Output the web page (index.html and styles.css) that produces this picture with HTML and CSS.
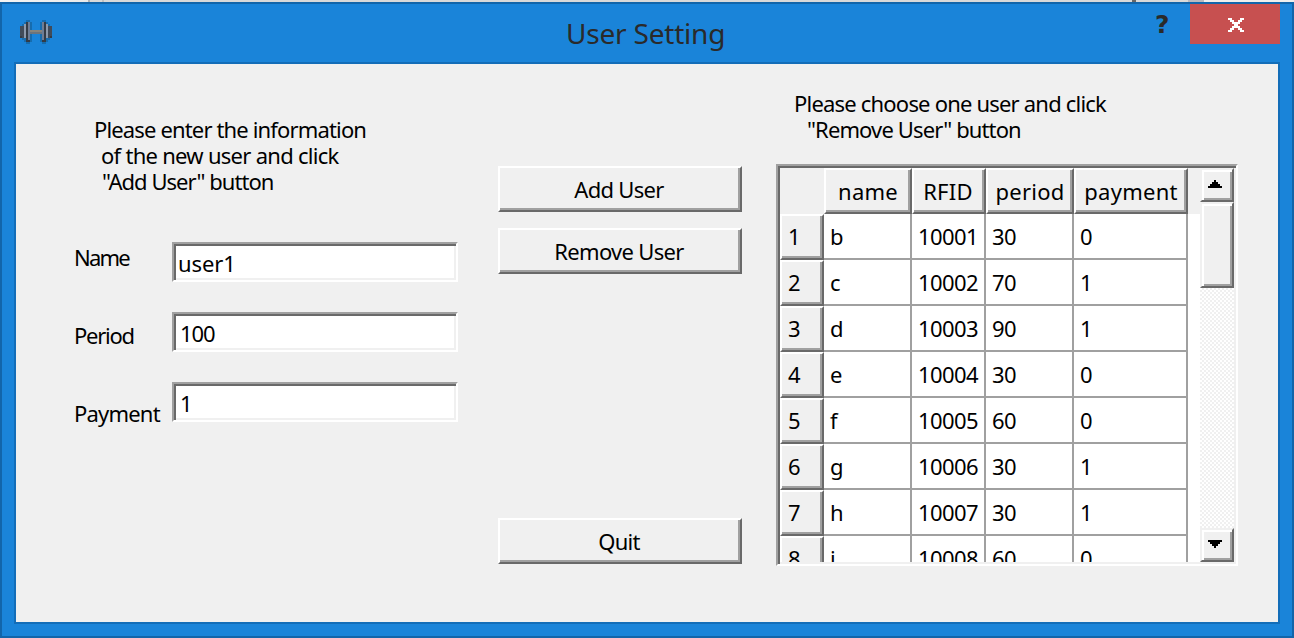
FILE: index.html
```html
<!DOCTYPE html>
<html lang="en">
<head>
<meta charset="utf-8">
<title>User Setting</title>
<link rel="stylesheet" href="styles.css">
</head>
<body>
<div class="backdrop"></div>
<div class="window">
  <header class="titlebar">
    <svg class="app-icon" width="32" height="24" viewBox="0 0 32 24" shape-rendering="crispEdges">
      <path fill="#166cae" d="M6 0h4v2h2v20h-2v2H6v-2H4v-2H2V4h2V2h2zM22 0h4v2h2v2h2v16h-2v2h-2v2h-4v-2h-2V2h2z"/>
      <path fill="#414b59" d="M0 6h4v12H0zM28 6h4v12h-4z"/>
      <path fill="#333b46" d="M6 2h4v20H6zM22 2h4v20h-4zM0 16h2v2H0zM30 16h2v2h-2z"/>
      <path fill="#8d9aac" d="M4 4h2v14H4zM26 4h2v14h-2z"/>
      <path fill="#6e7d95" d="M8 2h2v18H8zM22 2h2v18h-2z"/>
      <path fill="#333b46" d="M6 4h2v16H6zM24 4h2v16h-2z"/>
      <path fill="#6b747d" d="M10 10h12v4H10z"/>
      <path fill="#87847b" d="M10 10h12v2H10z"/>
    </svg>
    <h1 class="title">User Setting</h1>
    <span class="help">?</span>
    <button class="close" aria-label="Close">
      <svg width="16" height="14" viewBox="0 0 8 7" shape-rendering="crispEdges" fill="#fff"><path d="M0 0h2v1h1v1h2V1h1V0h2v1H7v1H6v1H5v1h1v1h1v1h1v1H6V6H5V5H3v1H2v1H0V6h1V5h1V4h1V3H2V2H1V1H0z"/></svg>
    </button>
  </header>
  <main class="client">
    <section class="form">
      <p class="hint add-hint"><span class="h1">Please enter the information</span><span class="h2">of the new user and click</span><span class="h3">"Add User" button</span></p>
      <div class="fields">
        <div class="labels"><span class="l-name">Name</span><span class="l-period">Period</span><span class="l-pay">Payment</span></div>
        <div class="inputs">
          <div class="input first">user1</div>
          <div class="input">100</div>
          <div class="input">1</div>
        </div>
      </div>
    </section>
    <section class="actions">
      <button class="btn b-add">Add User</button>
      <button class="btn b-remove">Remove User</button>
      <button class="btn quit">Quit</button>
    </section>
    <section class="users">
      <p class="hint remove-hint"><span class="r1">Please choose one user and click</span><span class="r2">"Remove User" button</span></p>
      <div class="frame">
        <div class="view">
          <div class="row head"><span class="corner"></span><span class="hc">name</span><span class="hc rfid">RFID</span><span class="hc">period</span><span class="hc">payment</span></div>
          <div class="row"><span class="rh">1</span><span>b</span><span>10001</span><span>30</span><span>0</span></div>
          <div class="row"><span class="rh">2</span><span>c</span><span>10002</span><span>70</span><span>1</span></div>
          <div class="row"><span class="rh">3</span><span>d</span><span>10003</span><span>90</span><span>1</span></div>
          <div class="row"><span class="rh">4</span><span>e</span><span>10004</span><span>30</span><span>0</span></div>
          <div class="row"><span class="rh">5</span><span>f</span><span>10005</span><span>60</span><span>0</span></div>
          <div class="row"><span class="rh">6</span><span>g</span><span>10006</span><span>30</span><span>1</span></div>
          <div class="row"><span class="rh">7</span><span>h</span><span>10007</span><span>30</span><span>1</span></div>
          <div class="row"><span class="rh">8</span><span>i</span><span>10008</span><span>60</span><span>0</span></div>
        </div>
        <div class="scrollbar">
          <div class="sb arrow"><svg width="14" height="8" viewBox="0 0 7 4" shape-rendering="crispEdges"><path d="M3 0h1v1h1v1h1v1h1v1H0V3h1V2h1V1h1z"/></svg></div>
          <div class="sb thumb"></div>
          <div class="track"></div>
          <div class="sb arrow"><svg width="14" height="8" viewBox="0 0 7 4" shape-rendering="crispEdges"><path d="M0 0h7v1H6v1H5v1H4v1H3V3H2V2H1V1H0z"/></svg></div>
        </div>
      </div>
    </section>
  </main>
</div>
</body>
</html>
```
FILE: styles.css
```css
* { box-sizing: border-box; }
body { margin: 0; width: 1294px; height: 638px; overflow: hidden; color: #000; font: 22px/26px "Noto Sans", sans-serif; }
p, h1 { margin: 0; font-weight: 400; }
button { padding: 0; border: 0; font: inherit; color: inherit; }
svg { display: block; }

.backdrop { height: 2px; background: linear-gradient(90deg, #f3f3f3 0, #e9e9e9 88px, #b4b4b4 88px 90px, #d9d9d9 90px 102px, #c0c0c0 102px 104px, #d9d9d9 104px 1132px, #666 1132px 1136px, #d9d9d9 1136px 1188px, #b9b9c0 1188px 1204px, #eee 1204px); }
.window { height: 636px; border: 2px solid #1265aa; background: #1a84d9; padding: 0 12px 12px; }
.titlebar { height: 58px; display: flex; align-items: flex-start; }
.app-icon { margin: 16px 0 0 6px; }
.title { margin: 11px 0 0 514px; width: 589px; font-size: 28px; line-height: 36px; letter-spacing: -.2px; color: #2a2a2a; white-space: nowrap; }
.help { width: 35px; margin-top: 7px; font: bold 25px/28px "DejaVu Sans", sans-serif; color: #2a2a2a; }
.close { width: 90px; height: 40px; background: #c75050; display: flex; justify-content: center; padding: 14px 0 0 2px; }
.client { height: 562px; border: 2px solid #136db8; background: #f0f0f0; display: flex; }

.form { width: 482px; padding: 52px 0 0 58px; }
.hint { display: flex; flex-direction: column; white-space: nowrap; }
.add-hint { padding-left: 20px; }
.h1 { letter-spacing: -.85px; }
.h2 { margin-left: 7px; letter-spacing: -.72px; }
.h3 { margin-left: 8px; letter-spacing: -.97px; }
.fields { display: flex; margin-top: 48px; }
.labels { width: 98px; padding-top: 2px; display: flex; flex-direction: column; gap: 52px; }
.l-name { letter-spacing: -1.8px; }
.l-period { letter-spacing: -1.25px; }
.l-pay { letter-spacing: -.8px; }
.inputs { display: flex; flex-direction: column; gap: 30px; }
.input { width: 286px; height: 40px; background: #fff; border: 2px solid; border-color: #a0a0a0 #fff #fff #a0a0a0; box-shadow: inset 2px 2px #696969, inset -2px -2px #f0f0f0; padding: 6px 0 0 6px; letter-spacing: -1.1px; }
.first { padding-left: 4px; letter-spacing: -.1px; }

.actions { width: 278px; padding-top: 102px; display: flex; flex-direction: column; gap: 16px; }
.btn { width: 244px; height: 46px; padding-right: 2px; background: #f0f0f0; border: 2px solid; border-color: #fff #696969 #696969 #fff; box-shadow: inset -2px -2px #a0a0a0; letter-spacing: -.7px; }
.quit { margin-top: 228px; }

.users { padding-top: 26px; }
.remove-hint { padding-left: 18px; }
.r1 { letter-spacing: -.8px; }
.r2 { margin-left: 13px; letter-spacing: -.88px; }
.frame { margin-top: 22px; width: 462px; height: 402px; display: flex; background: #fff; border: 2px solid; border-color: #a0a0a0 #fff #fff #a0a0a0; padding: 2px; box-shadow: inset 2px 2px #696969, inset -2px -2px #f0f0f0; }
.view { width: 420px; height: 394px; overflow: hidden; }
.row { display: grid; grid-template-columns: 44px 88px 74px 88px 114px; grid-template-rows: 46px; height: 46px; }
.row span { border-right: 2px solid #a0a0a0; border-bottom: 2px solid #a0a0a0; padding-left: 6px; line-height: 44px; letter-spacing: -.6px; }
.row.head { background: #f0f0f0; }
.row .corner { border: 0; }
.row .hc, .row .rh { background: #f0f0f0; border: 2px solid; border-color: #fff #696969 #696969 #fff; box-shadow: inset -2px -2px #a0a0a0; line-height: 42px; }
.row .hc { padding: 0; text-align: center; letter-spacing: .25px; }
.row .rfid { padding-right: 2px; }
.row .rh { padding-left: 6px; line-height: 40px; }
.scrollbar { width: 34px; height: 394px; display: flex; flex-direction: column; }
.sb { border: 2px solid; border-color: #f0f0f0 #696969 #696969 #f0f0f0; background: #f0f0f0; box-shadow: inset 2px 2px #fff, inset -2px -2px #a0a0a0; }
.arrow { height: 34px; padding: 10px 0 0 6px; }
.thumb { height: 86px; }
.track { flex: 1; background: repeating-conic-gradient(#f0f0f0 0 25%, #fff 0 50%) 0 0 / 4px 4px; }
```
